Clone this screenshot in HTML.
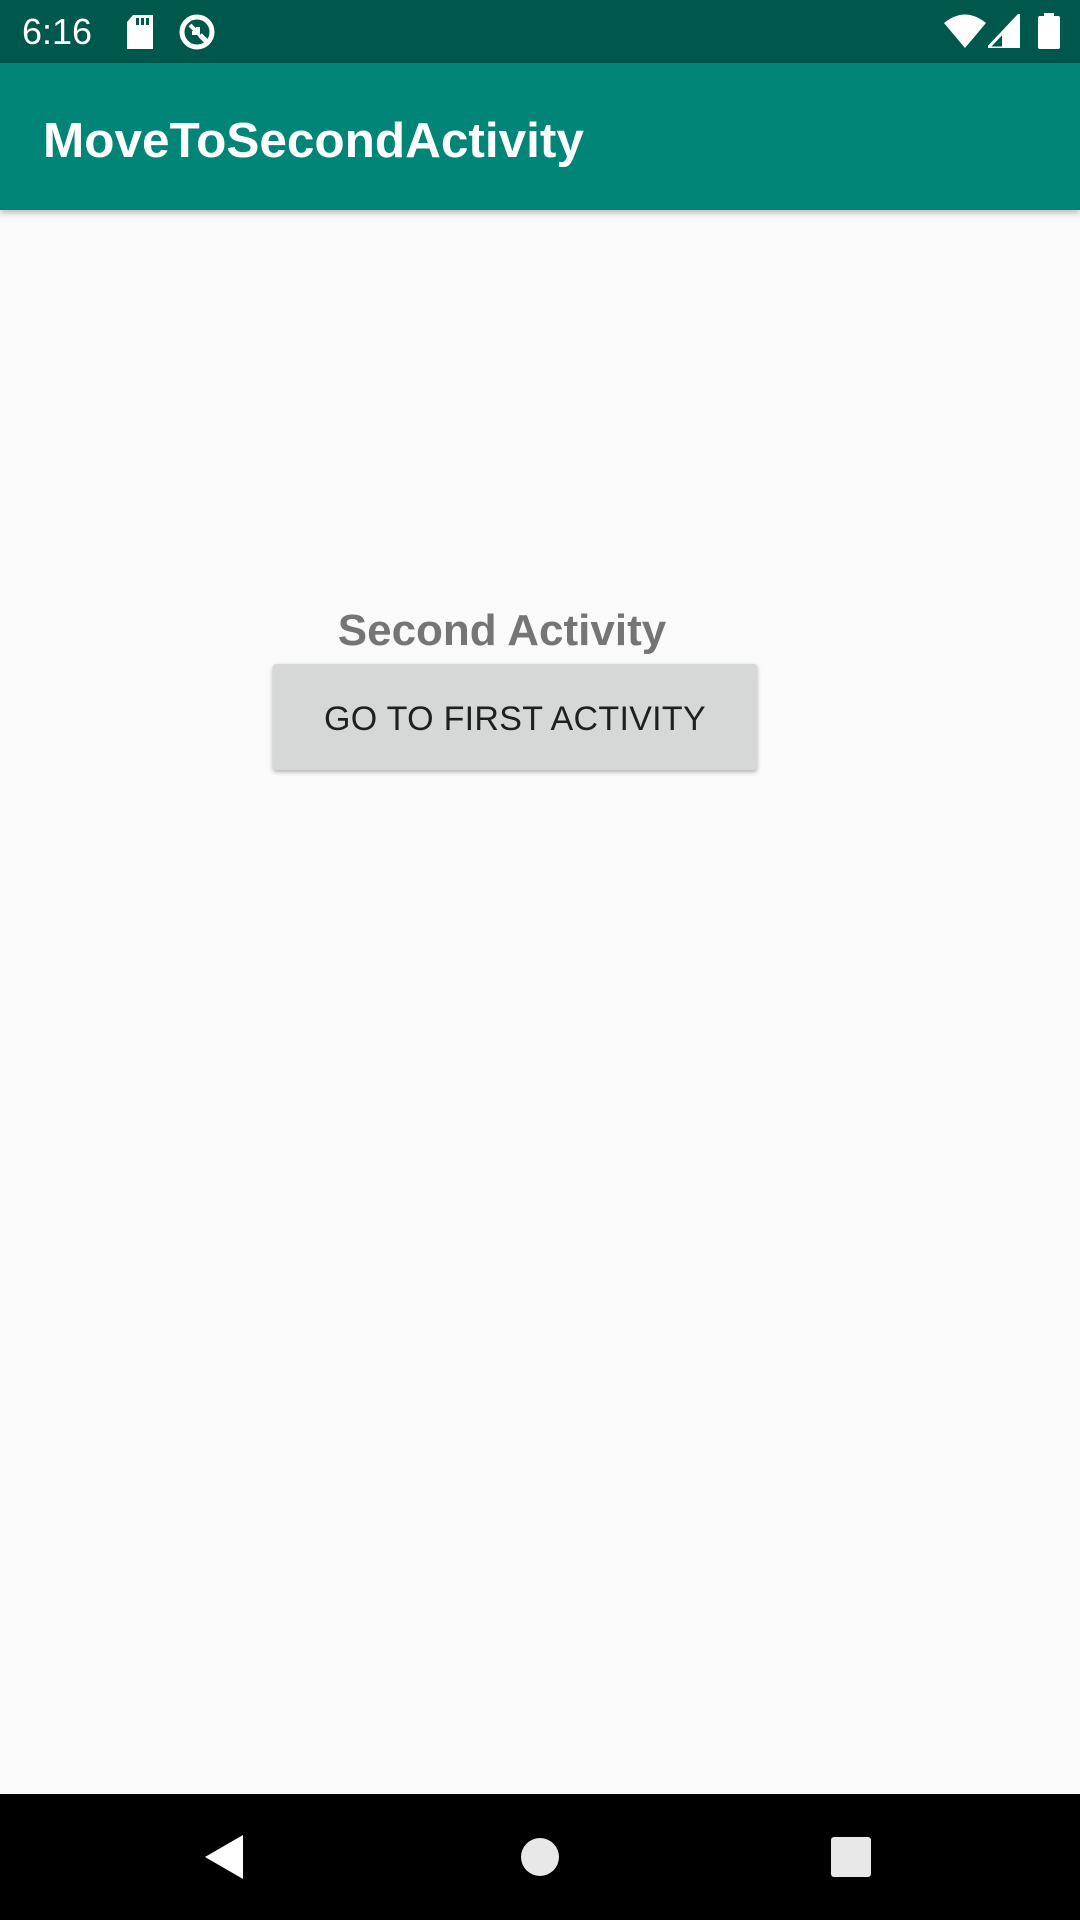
<!DOCTYPE html>
<html><head><meta charset="utf-8"><style>
html,body{margin:0;padding:0;}
body{width:1080px;height:1920px;position:relative;background:#fafafa;font-family:"Liberation Sans",Roboto,sans-serif;overflow:hidden;}
#sb{position:absolute;left:0;top:0;width:1080px;height:63px;background:#00574b;color:#fff;}
#ab{position:absolute;left:0;top:63px;width:1080px;height:147px;background:#008577;box-shadow:0 3px 6px rgba(0,0,0,.25);}
#ab span{position:absolute;left:43px;top:49px;font-size:49.5px;font-weight:bold;color:#fff;}
#t{position:absolute;left:0;width:1004px;text-align:center;top:606px;font-size:44px;font-weight:bold;color:#757575;}
#btn{position:absolute;left:273px;top:664px;width:484px;height:106px;background:#d6d7d7;border-radius:3px;box-shadow:0 2px 4px rgba(0,0,0,.3);text-align:center;line-height:111px;font-size:34px;color:#1f1f1f;letter-spacing:0.3px;}
#nb{position:absolute;left:0;top:1794px;width:1080px;height:126px;background:#000;}
</style></head><body>
<div id="sb">
<span style="position:absolute;left:22px;top:11px;font-size:36px;">6:16</span>
<svg style="position:absolute;left:125px;top:15px" width="30" height="34" viewBox="0 0 30 34"><path d="M8 0H28V34H2V7Z" fill="#fff"/><rect x="11" y="3" width="3" height="7" fill="#00574b"/><rect x="16" y="3" width="3" height="7" fill="#00574b"/><rect x="21" y="3" width="3" height="7" fill="#00574b"/></svg>
<svg style="position:absolute;left:178px;top:13px" width="38" height="38" viewBox="0 0 38 38"><circle cx="19" cy="19" r="15" fill="none" stroke="#fff" stroke-width="5"/><path d="M12 12L20 20L20 14M20 20L14 20" stroke="#fff" stroke-width="4" fill="none"/><path d="M22 22L30 30" stroke="#fff" stroke-width="5"/></svg>
<svg style="position:absolute;left:944px;top:14px" width="42" height="34" viewBox="0 0 42 34"><path d="M0 9Q21 -8 42 9L21 34Z" fill="#fff"/></svg>
<svg style="position:absolute;left:988px;top:14px" width="32" height="34" viewBox="0 0 32 34"><path d="M32 0V34H0Z" fill="none" stroke="#fff" stroke-width="3"/><path d="M32 0V34H14V18Z" fill="#fff"/></svg>
<svg style="position:absolute;left:1038px;top:13px" width="22" height="36" viewBox="0 0 22 36"><rect x="6" y="0" width="10" height="4" fill="#fff"/><rect x="0" y="3" width="22" height="33" rx="2" fill="#fff"/></svg>
</div>
<div id="ab"><span>MoveToSecondActivity</span></div>
<div id="t">Second Activity</div>
<div id="btn">GO TO FIRST ACTIVITY</div>
<div id="nb">
<svg style="position:absolute;left:205px;top:41px" width="40" height="44" viewBox="0 0 40 44"><path d="M38 0V44L0 22Z" fill="#fff"/></svg>
<svg style="position:absolute;left:520px;top:43px" width="40" height="40"><circle cx="20" cy="20" r="19" fill="#e8e8e8"/></svg>
<div style="position:absolute;left:831px;top:43px;width:40px;height:40px;background:#e8e8e8;border-radius:3px"></div>
</div>
</body></html>
